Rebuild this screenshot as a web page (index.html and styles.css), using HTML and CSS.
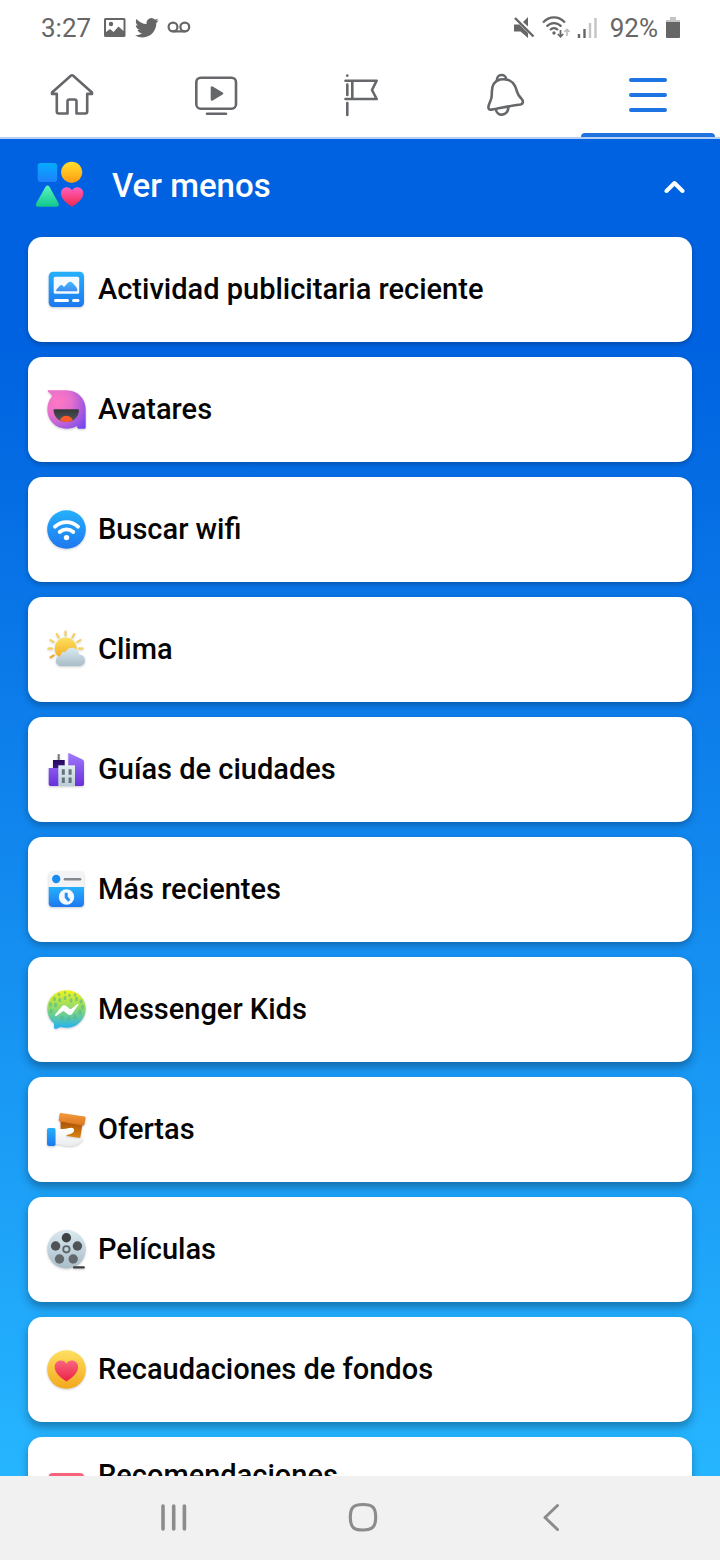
FILE: index.html
```html
<!DOCTYPE html>
<html lang="es">
<head>
    <meta charset="UTF-8">
    <meta name="viewport" content="width=device-width, initial-scale=1.0">
    <title>Menú</title>
    <link rel="stylesheet" href="styles.css">
</head>
<body>
    <!-- Shared gradients -->
    <svg class="defs" width="0" height="0" aria-hidden="true">
        <defs>
            <linearGradient id="blue" x1="0" y1="0" x2="0" y2="1"><stop offset="0" stop-color="#25b0fb"/><stop offset="1" stop-color="#1e78f0"/></linearGradient>
            <linearGradient id="sky" x1="0" y1="0" x2="0" y2="1"><stop offset="0" stop-color="#04abff"/><stop offset="1" stop-color="#2080fb"/></linearGradient>
            <linearGradient id="yellow" x1="0" y1="0" x2="0" y2="1"><stop offset="0" stop-color="#fde060"/><stop offset="1" stop-color="#f3a81c"/></linearGradient>
            <linearGradient id="amber" x1="0" y1="0" x2="0" y2="1"><stop offset="0" stop-color="#ffe02e"/><stop offset="1" stop-color="#ff9a12"/></linearGradient>
            <linearGradient id="green" x1="0" y1="0" x2="0" y2="1"><stop offset="0" stop-color="#5cf5c0"/><stop offset="1" stop-color="#10c78c"/></linearGradient>
            <linearGradient id="pink" x1="0" y1="0" x2="0" y2="1"><stop offset="0" stop-color="#ff5fc0"/><stop offset="1" stop-color="#f02849"/></linearGradient>
            <linearGradient id="red" x1="0" y1="0" x2="0" y2="1"><stop offset="0" stop-color="#f8677f"/><stop offset="1" stop-color="#ec2145"/></linearGradient>
            <linearGradient id="purple" x1="0" y1="0" x2="0" y2="1"><stop offset="0" stop-color="#a07afb"/><stop offset="1" stop-color="#6a30da"/></linearGradient>
            <linearGradient id="navy" x1="0" y1="0" x2="0" y2="1"><stop offset="0" stop-color="#250a5c"/><stop offset="1" stop-color="#4a1e9e"/></linearGradient>
            <linearGradient id="silver" x1="0" y1="0" x2="0" y2="1"><stop offset="0" stop-color="#d9e9ef"/><stop offset="1" stop-color="#a9bdc8"/></linearGradient>
            <linearGradient id="wall" x1="0" y1="0" x2="0" y2="1"><stop offset="0" stop-color="#e3eff4"/><stop offset="1" stop-color="#b9ccd6"/></linearGradient>
            <linearGradient id="dark" x1="0" y1="0" x2="0" y2="1"><stop offset="0" stop-color="#34373a"/><stop offset="1" stop-color="#55595c"/></linearGradient>
            <linearGradient id="kids" x1="0" y1="0" x2="0" y2="1"><stop offset="0" stop-color="#f4f31a"/><stop offset=".5" stop-color="#86d873"/><stop offset="1" stop-color="#22aff5"/></linearGradient>
            <linearGradient id="lid" x1="0" y1="0" x2="0" y2="1"><stop offset="0" stop-color="#f39a3c"/><stop offset="1" stop-color="#dc7620"/></linearGradient>
            <linearGradient id="box" x1="0" y1="0" x2="0" y2="1"><stop offset="0" stop-color="#a84e08"/><stop offset="1" stop-color="#d9850f"/></linearGradient>
            <linearGradient id="glove" x1="0" y1="0" x2="0" y2="1"><stop offset="0" stop-color="#ffffff"/><stop offset="1" stop-color="#e9ebee"/></linearGradient>
            <radialGradient id="avatar" cx=".25" cy=".3" r=".95"><stop offset="0" stop-color="#ff78c4"/><stop offset=".4" stop-color="#e66fcc"/><stop offset="1" stop-color="#7548ef"/></radialGradient>
        </defs>
    </svg>

    <div class="status-bar">
        <div class="status-group">
            <span class="clock">3:27</span>
            <svg width="24" height="24" viewBox="0 0 24 24"><path fill="#666" fill-rule="evenodd" d="M2.500 2h18.500a1.500 1.500 0 0 1 1.500 1.500v16a1.500 1.500 0 0 1-1.500 1.500H2.500A1.500 1.500 0 0 1 1 19.500v-16A1.500 1.500 0 0 1 2.500 2zM3 4v12l4-3 3.500 3 5-5.500L20.500 15V4z"/><circle cx="8" cy="8" r="2.200" fill="#666"/></svg>
            <svg width="24" height="24" viewBox="0 0 24 24"><path fill="#666" d="M23.600 4.200c-.8.400-1.800.7-2.700.8 1-.6 1.700-1.500 2.100-2.600-.9.500-2 1-3.100 1.200A4.900 4.900 0 0 0 11.600 8C7.500 7.800 4 5.900 1.500 2.900c-1.300 2.300-.7 5.100 1.500 6.600-.8 0-1.500-.2-2.200-.6 0 2.300 1.600 4.400 3.900 4.900-.7.200-1.400.2-2.200.1.600 1.900 2.400 3.300 4.600 3.400A9.900 9.900 0 0 1 0 19.300 14 14 0 0 0 7.500 21.500c9 0 14.100-7.600 13.800-14.400.9-.8 1.700-1.700 2.300-2.900z"/></svg>
            <svg width="24" height="24" viewBox="0 0 24 24"><g fill="none" stroke="#666" stroke-width="2.200"><circle cx="6" cy="11" r="4.400"/><circle cx="17.800" cy="11" r="4.400"/><path d="M6 15.400h12"/></g></svg>
        </div>
        <div class="status-group">
            <svg width="22" height="24" viewBox="0 0 22 24"><path fill="#666" d="M1 8.500h5.500L15 17v5l-7.500-6.500H1zM10 6l5-5v9.500z"/><path d="M2 2l18.500 18.500" stroke="#666" stroke-width="2.400"/></svg>
            <svg width="28" height="24" viewBox="0 0 28 24"><g fill="none" stroke="#666" stroke-width="2.200"><path d="M1 6.500C7.500-.3 16.500-.3 23 6.500"/><path d="M4.500 10.500c4.500-4.600 10.500-4.600 15 0"/><path d="M8 14c2.500-2.500 5.500-2.500 8 0"/><path d="M18.500 14v6.500M15.800 18l2.700 2.800 2.700-2.800" stroke-width="1.800"/><path d="M25 20v-6.500M22.400 16l2.600-2.700 2.600 2.700" stroke="#bbb" stroke-width="1.600"/></g><circle cx="12" cy="17" r="1.700" fill="#666"/></svg>
            <svg width="20" height="24" viewBox="0 0 20 24"><path d="M2 18v4M7.500 13v9" stroke="#666" stroke-width="2.400"/><path d="M13 7v15M18.500 2v20" stroke="#c4c4c4" stroke-width="2.400"/></svg>
            <span class="battery-level">92%</span>
            <svg width="16" height="24" viewBox="0 0 16 24"><path fill="#c4c4c4" d="M5 1h6v3h4v3H1V4h4z"/><path fill="#666" d="M1 6h14v15a1 1 0 0 1-1 1H2a1 1 0 0 1-1-1z"/></svg>
        </div>
    </div>

    <nav class="tabs">
        <a class="tab" href="#" aria-label="Inicio">
            <svg width="48" height="48" viewBox="0 0 48 48"><path d="M22.800 3.800a1.800 1.800 0 0 1 2.400 0L44 20.500v1.400h-4.800v17.600q0 2-2 2h-8.700V29.500q0-2-2-2h-5q-2 0-2 2v12h-8.700q-2 0-2-2V21.900H4v-1.400z"/></svg>
        </a>
        <a class="tab" href="#" aria-label="Watch">
            <svg width="48" height="48" viewBox="0 0 48 48"><rect x="4.300" y="5.700" width="39.700" height="31" rx="4.500"/><path d="M20 15.500v12l10-6z" fill="#65676b"/><path d="M15 41.700h19"/></svg>
        </a>
        <a class="tab" href="#" aria-label="Páginas">
            <svg width="48" height="48" viewBox="0 0 48 48"><path d="M11.300 3.500v.2M11.300 12.500v10.500M11.300 31v12M9.500 8.700h31.200L36 18l4.700 9H9.500M16.300 8.700V27"/></svg>
        </a>
        <a class="tab" href="#" aria-label="Notificaciones">
            <svg width="48" height="48" viewBox="0 0 48 48"><path d="M11.500 37.600C8 38.200 8 35.500 9 32.500c1.200-3.800 3-5 2.800-10.500C11.500 13.500 14 9 20 7.600c7-1.400 12.500 1.400 15 6.400 2.700 6 1.500 8 6 12.200 2.700 2.800 2.500 5.800-.5 6.300-11 1.300-20 3.600-29 5.100z"/><path d="M17 8.300c-.5-6.500 8.700-7.200 9.300-.8M15.800 37.200c1 7.600 11.800 7.600 12.700-2"/></svg>
        </a>
        <a class="tab active" href="#" aria-label="Menú" aria-current="page">
            <svg width="48" height="48" viewBox="0 0 48 48"><path d="M7 8h34M7 23h34M7 38h34"/></svg>
        </a>
    </nav>

    <main class="menu">
        <button class="menu-toggle" type="button" aria-expanded="true">
            <svg width="48" height="48" viewBox="0 0 48 48"><rect x="1.700" y="2" width="19.500" height="19" rx="3" fill="url(#sky)"/><circle cx="35.700" cy="11.300" r="10.600" fill="url(#amber)"/><path fill="url(#green)" d="M9.500 25.700q2-2.200 4 0L22.400 42q1.500 3.700-1.800 3.700H2.200q-3.300 0-1.800-3.700z"/><path fill="url(#pink)" d="M36 29.200c-3-5-11-3.700-11 3.300 0 6 6.500 10 11 13.300 4.500-3.300 11.300-7.300 11.300-13.300 0-7-8.300-8.300-11.300-3.300z"/></svg>
            <span>Ver menos</span>
            <svg class="chevron" width="24" height="16" viewBox="0 0 24 16"><path d="M4.500 14l8-8 8 8"/></svg>
        </button>

        <div class="cards">
            <a class="card" href="#">
                <svg class="icon" viewBox="0 0 39 39"><rect x="1.700" y="1.700" width="35.300" height="35.300" rx="4.500" fill="url(#blue)"/><rect x="6.700" y="6.700" width="25.500" height="17" rx="1.500" fill="#f2f9ff"/><path fill="url(#blue)" opacity=".85" d="M9.500 21.300c-1-1 0-2 1-3l2.500-2.700q1.700-1.500 3 .5l1 1 4-4.300q2.300-2.300 4.500 0l3.500 4q2.200 3 1 4.500z"/><path d="M8.500 30.500h12M26.500 30.500H31" stroke="#fff" stroke-width="3" stroke-linecap="round"/></svg>
                <span>Actividad publicitaria reciente</span>
            </a>
            <a class="card" href="#">
                <svg class="icon" viewBox="0 0 39 39"><path fill="url(#avatar)" d="M2 .3h17.500C31 .3 38.700 9 38.700 19.500v18q0 1.200-1.200 1.200h-6q-1.500 0-1.500-2.700c-3 2-6.500 2.700-10.500 2.700C8.500 38.700.3 30 .3 19.500.3 14 2.200 9.500 5 6.500 4.800 4 2.500 3.500 1 1.800 0 .8 1 .3 2 .3z"/><path fill="url(#dark)" d="M7.700 19.300h23q1.300 0 1.300 1.400C31 27.500 26.500 32 19.300 32S7.500 27.500 6.500 20.700q0-1.400 1.200-1.400z"/><path fill="#ff5a2c" d="M13 30.200c1.500-6 11-6 12.700 0-3.200 2.200-9.200 2.300-12.700 0z"/></svg>
                <span>Avatares</span>
            </a>
            <a class="card" href="#">
                <svg class="icon" viewBox="0 0 39 39"><circle cx="19.500" cy="19.500" r="19.300" fill="url(#blue)"/><g fill="none" stroke="#fff" stroke-width="3.800" stroke-linecap="round"><path d="M8 16.700c6.500-6.200 16.500-6.200 23 0"/><path d="M12.700 22c4-3.600 9.600-3.600 13.600 0"/></g><circle cx="19.500" cy="27.600" r="2.700" fill="#fff"/></svg>
                <span>Buscar wifi</span>
            </a>
            <a class="card" href="#">
                <svg class="icon" viewBox="0 0 39 39"><g stroke="#f7ce56" stroke-width="2" stroke-linecap="round"><path d="M18.500 1.500v4M9.800 4l2 3.500M27.300 4l-2 3.500M3.500 10l3.300 2M33.500 10l-3.300 2M1.300 18.500h4M31.800 18.500h3.800"/><path d="M3.500 27.300l3.300-2" stroke="#eda92c"/></g><circle cx="18.700" cy="18.500" r="10.900" fill="url(#yellow)"/><path fill="url(#silver)" d="M14.500 36c-7 0-7.500-9.500-1-10.600.2-2.700 2.500-4 5-3.400 3-6.500 13-5.500 13.300 2.600C40 24.500 40 36 32.500 36z"/></svg>
                <span>Clima</span>
            </a>
            <a class="card" href="#">
                <svg class="icon" viewBox="0 0 39 39"><path d="M11.700 4v8" stroke="#777b80" stroke-width="2"/><rect x="6" y="10" width="11.700" height="14" fill="url(#navy)"/><path fill="url(#purple)" d="M1.700 18h10.600v18H3.500q-1.800 0-1.800-1.800zM21.300 3.700q0-1 1-.5L35.500 9.500Q37 10.300 37 12v22.200q0 1.800-1.800 1.800H21.300z"/><path fill="url(#wall)" d="M11.300 15.300H28V36H11.300z"/><path fill="#667278" d="M14.800 19.200h3v5.500h-3zM21.600 19.200h3v5.500h-3zM14.800 27.500h3V33h-3zM21.600 27.500h3V33h-3z"/></svg>
                <span>Guías de ciudades</span>
            </a>
            <a class="card" href="#">
                <svg class="icon" viewBox="0 0 39 39"><rect x="1.700" y="1.300" width="35.300" height="35.700" rx="4" fill="#f1f3f5"/><path fill="url(#blue)" d="M1.700 17H37v16q0 4-4 4H5.700q-4 0-4-4z"/><circle cx="9.200" cy="9" r="4.200" fill="#1c8cf5"/><path d="M18 9.300h15" stroke="#84898e" stroke-width="2.600" stroke-linecap="round"/><circle cx="19.500" cy="27" r="7.700" fill="#f3f8fd"/><path d="M19.200 22.800v4.400l3 3.500" fill="none" stroke="#2490f6" stroke-width="3"/></svg>
                <span>Más recientes</span>
            </a>
            <a class="card" href="#">
                <svg class="icon" viewBox="0 0 39 39"><path fill="url(#kids)" d="M19.500.2c11 0 19.200 8 19.200 18.300S30.500 37.800 19.500 37.800c-2 0-4-.3-5.700-.8l-4.600 1.700q-2.200.6-2.200-1.500v-3.800C2.700 30 .3 25 .3 19 .3 8 8.500.2 19.500.2z"/><g fill="#52b98a" opacity=".6"><ellipse cx="12" cy="4.500" rx="1.300" ry="1.800"/><ellipse cx="18" cy="2.500" rx="1.200" ry="1.500"/><ellipse cx="22.500" cy="5.500" rx="1.300" ry="1.800"/><ellipse cx="28" cy="5" rx="1.300" ry="1.800"/><ellipse cx="7.500" cy="9" rx="1.500" ry="2.200"/><ellipse cx="12.800" cy="10" rx="1.500" ry="2.200"/><ellipse cx="18" cy="8" rx="1.500" ry="2.200"/><ellipse cx="24" cy="10.500" rx="1.500" ry="2.200"/><ellipse cx="29.500" cy="9" rx="1.500" ry="2.200"/><ellipse cx="34" cy="11.500" rx="1.500" ry="2.200"/><ellipse cx="3.500" cy="14.500" rx="1.500" ry="2.500"/><ellipse cx="8.500" cy="15" rx="1.600" ry="2.500"/><ellipse cx="35.500" cy="17" rx="1.600" ry="2.500"/><ellipse cx="4" cy="21" rx="1.600" ry="2.500"/><ellipse cx="33" cy="22" rx="1.800" ry="2.800"/><ellipse cx="28" cy="27" rx="1.800" ry="2.800"/><ellipse cx="22" cy="29" rx="1.800" ry="2.500"/><ellipse cx="15" cy="28" rx="1.800" ry="2.500"/></g><path fill="#fff" d="M8.300 24.300l6.500-7.800q2-2.200 4.500-.4l3.200 2.600q1 .7 2 0l5.700-4.600q1.700-1 1 .8l-5.800 8.500q-1.800 2.600-4.500.8l-3.700-2.800q-.9-.6-1.800 0l-5.800 4.300q-2.200 1-1.300-1.400z"/></svg>
                <span>Messenger Kids</span>
            </a>
            <a class="card" href="#">
                <svg class="icon" viewBox="0 0 39 39"><path fill="url(#box)" d="M13.500 10.500l22 3.500-2.300 14-19.500-3z"/><path fill="url(#lid)" d="M12.600 4q.2-1.200 1.400-1l23.400 3.500q1.400.2 1.200 1.500l-1.200 6.500q-.3 1.300-1.600 1.100l-23-4q-1.400-.2-1.100-1.500z"/><rect y="18" width="8.700" height="18" rx="2" fill="url(#blue)"/><path fill="url(#glove)" d="M8.700 19h8c3 0 5.300-1.200 7.800-1.200 3.500 0 3.500 4.200.2 5.600-2.500 1-5.700 1.300-5.700 3 0 2.700 11.500 3.300 15.400 1.300 1.800-.6 1.800 1.100.8 2.500C32.500 34 27.500 36 22 36s-8-1.700-13.300-1.700z"/></svg>
                <span>Ofertas</span>
            </a>
            <a class="card" href="#">
                <svg class="icon" viewBox="0 0 39 39"><circle cx="19.500" cy="19.300" r="19.200" fill="url(#silver)"/><g fill="#4f5356"><circle cx="19.400" cy="7.700" r="4.700" fill="#3f4245"/><circle cx="8.600" cy="16" r="4.700"/><circle cx="30.400" cy="16" r="4.700"/><circle cx="12.500" cy="29" r="4.700" fill="#63686c"/><circle cx="26.200" cy="29" r="4.700" fill="#63686c"/></g><circle cx="19.400" cy="19.300" r="3.200" fill="none" stroke="#5c6266" stroke-width="1.800"/><path d="M27 37.400h9.800" stroke="#3c3f42" stroke-width="2.200" stroke-linecap="round"/></svg>
                <span>Películas</span>
            </a>
            <a class="card" href="#">
                <svg class="icon" viewBox="0 0 39 39"><circle cx="19.500" cy="19.500" r="19.300" fill="url(#yellow)"/><path fill="url(#red)" d="M19.400 13.500c-3-5-11.700-3.800-11.700 3.700 0 6.500 7.500 11.300 11.700 14.300 4.200-3 11.700-7.800 11.700-14.300 0-7.500-8.700-8.700-11.700-3.700z"/></svg>
                <span>Recaudaciones de fondos</span>
            </a>
            <a class="card" href="#">
                <svg class="icon" viewBox="0 0 39 39"><rect x="1.700" y="3" width="35.300" height="32" rx="4" fill="url(#red)"/></svg>
                <span class="two-lines">Recomendaciones</span>
            </a>
        </div>
    </main>

    <div class="system-nav">
        <button type="button" aria-label="Recientes"><svg width="32" height="32" viewBox="0 0 32 32"><path d="M5 5v23M15.700 5v23M26.400 5v23" stroke-width="3.600"/></svg></button>
        <button type="button" aria-label="Inicio"><svg width="32" height="32" viewBox="0 0 32 32"><path d="M16 3.500c9.500 0 12.700 3 12.700 12.700S25.500 29 16 29 3.300 26 3.300 16.200 6.500 3.500 16 3.500z" stroke-width="3.200"/></svg></button>
        <button type="button" aria-label="Atrás"><svg width="32" height="32" viewBox="0 0 32 32"><path d="M22.500 4.500L10 16.500l12.500 12" stroke-width="3"/></svg></button>
    </div>
</body>
</html>
```
FILE: styles.css
```css
* {
    margin: 0;
    padding: 0;
    box-sizing: border-box;
}

body {
    display: flex;
    flex-direction: column;
    height: 100vh;
    overflow: hidden;
    background: #fff;
    font-family: Roboto, "Noto Sans", sans-serif;
}

svg {
    display: block;
    flex-shrink: 0;
}

.defs {
    position: absolute;
}

button {
    border: none;
    background: none;
    font: inherit;
    cursor: pointer;
}

/* Status bar */
.status-bar {
    display: flex;
    justify-content: space-between;
    align-items: center;
    flex-shrink: 0;
    height: 56px;
    padding: 0 39px 0 41px;
    color: #666;
    font-size: 26px;
}

.status-group {
    display: flex;
    align-items: center;
    gap: 8px;
}

.status-group:last-child {
    gap: 7px;
}

.clock {
    margin-right: 4px;
}

.battery-level {
    margin-left: 6px;
}

/* Top tabs */
.tabs {
    display: flex;
    flex-shrink: 0;
    height: 83px;
    border-bottom: 2px solid #b3cff3;
}

.tab {
    position: relative;
    display: flex;
    flex: 1;
    justify-content: center;
    align-items: center;
    padding-bottom: 2px;
}

.tab svg {
    fill: none;
    stroke: #65676b;
    stroke-width: 2.6;
    stroke-linecap: round;
    stroke-linejoin: round;
}

.tab.active svg {
    stroke: #1f74e4;
    stroke-width: 4;
}

.tab.active::after {
    content: '';
    position: absolute;
    left: 5px;
    right: 5px;
    bottom: 0;
    height: 4px;
    border-radius: 4px 4px 0 0;
    background: #1f74e0;
}

/* Menu */
.menu {
    flex: 1;
    min-height: 0;
    overflow: hidden;
    background: linear-gradient(#0062e0 15%, #26b5ff);
}

.menu-toggle {
    display: flex;
    align-items: center;
    gap: 28px;
    width: 100%;
    height: 92px;
    padding: 0 34px 0 36px;
    color: #fff;
    font-size: 33px;
    font-weight: 500;
}

.chevron {
    margin-left: auto;
    fill: none;
    stroke: #fff;
    stroke-width: 4;
    stroke-linecap: round;
    stroke-linejoin: round;
}

.cards {
    display: flex;
    flex-direction: column;
    gap: 15px;
    padding: 6px 28px 28px;
}

.card {
    display: flex;
    align-items: center;
    gap: 12px;
    min-height: 105px;
    padding: 0 19px;
    border-radius: 14px;
    background: #fff;
    box-shadow: 0 2px 5px rgba(0, 0, 0, 0.25);
    color: #050505;
    font-size: 29px;
    font-weight: 500;
    line-height: 29px;
    text-decoration: none;
}

.card:nth-child(n+4) {
    box-shadow: 0 3px 7px rgba(0, 0, 0, 0.28);
}

.card:nth-child(n+7) {
    box-shadow: 0 5px 9px rgba(0, 0, 0, 0.3);
}

.two-lines {
    min-height: 58px;
}

.icon {
    width: 39px;
    height: 39px;
    overflow: visible;
    filter: drop-shadow(0 1px 1px rgba(0, 0, 0, 0.2));
}

/* System navigation */
.system-nav {
    display: flex;
    justify-content: center;
    align-items: center;
    flex-shrink: 0;
    height: 84px;
    padding: 0 0 2px 5px;
    background: #f1f1f1;
}

.system-nav button {
    display: flex;
    justify-content: center;
    width: 26.3%;
}

.system-nav svg {
    fill: none;
    stroke: #8c8c8c;
    stroke-linecap: round;
    stroke-linejoin: round;
}
```
